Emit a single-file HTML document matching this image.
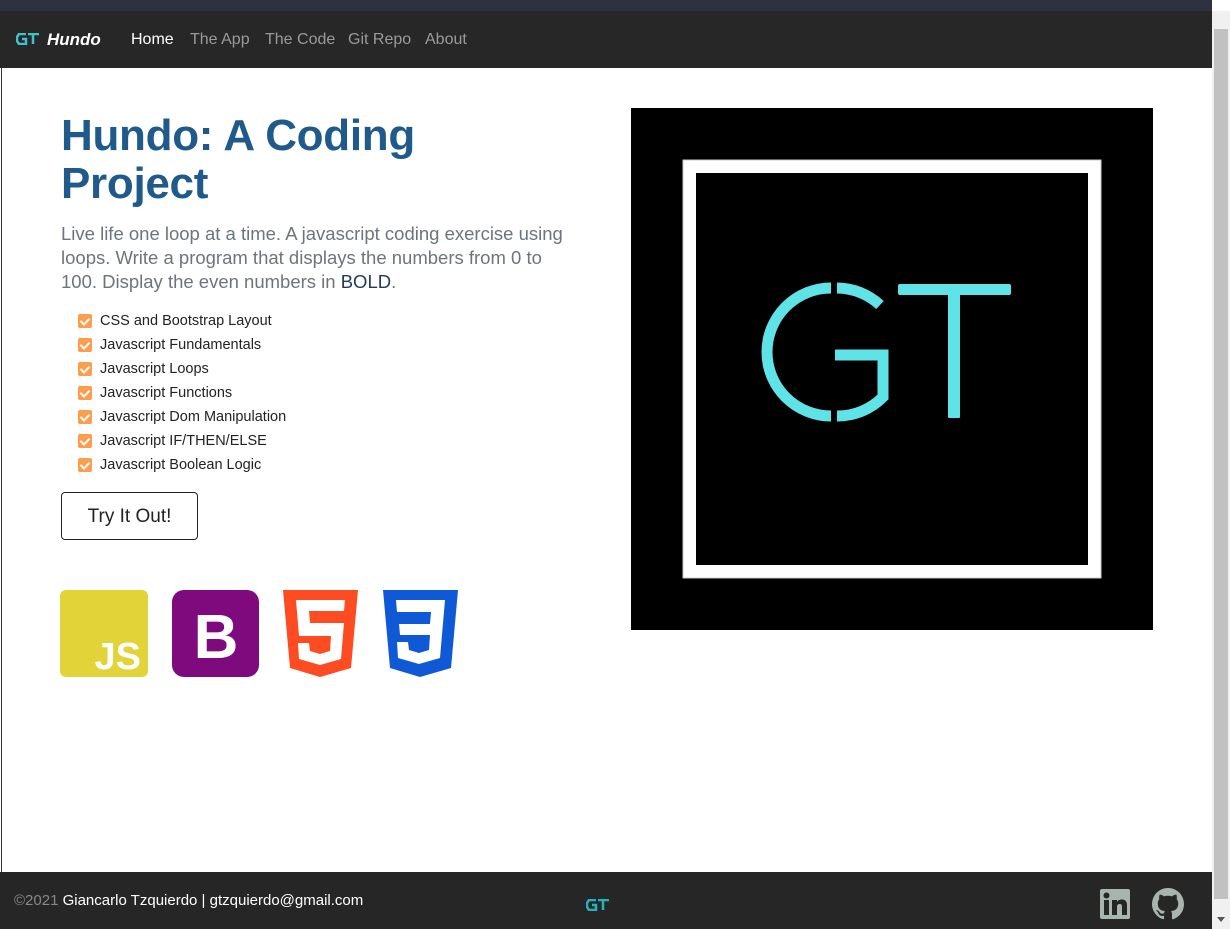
<!DOCTYPE html>
<html><head><meta charset="utf-8"><style>
*{box-sizing:border-box;margin:0;padding:0}
body{width:1230px;height:929px;overflow:hidden;background:#fff;font-family:"Liberation Sans",sans-serif;position:relative}
.top{position:absolute;left:0;top:0;width:1212px;height:11px;background:#2e3140}
.nav{position:absolute;left:0;top:11px;width:1212px;height:57px;background:#272727}
.nav a{position:absolute;top:20px;font-size:16px;color:#9a9a9a;text-decoration:none}
.brand{position:absolute;left:47px;top:19px;color:#fff;font-weight:bold;font-style:italic;font-size:17px}
.main{position:absolute;left:1px;top:68px;width:1211px;height:804px;background:#fff;border-left:1px solid #333}
h1{position:absolute;left:61px;top:112px;font-size:44px;line-height:48px;color:#1f5a8a;font-weight:bold;width:420px;letter-spacing:-0.3px}
.lead{position:absolute;left:61px;top:222px;width:515px;font-size:18.5px;line-height:24px;color:#6c757d}
.lead b{font-weight:normal;color:#1f3a5a}
ul{position:absolute;left:78px;top:311px;list-style:none}
li{height:24px;font-size:14.5px;color:#222;position:relative;padding-left:22px;line-height:20px}
li:before{content:"";position:absolute;left:0;top:3px;width:14px;height:14px;background:#fd9d4d;border-radius:2px}
li:after{content:"";position:absolute;left:4px;top:5px;width:4px;height:7px;border:solid #fff;border-width:0 2px 2px 0;transform:rotate(45deg)}
.btn{position:absolute;left:61px;top:492px;width:137px;height:48px;border:1px solid #222;border-radius:4px;font-size:19px;color:#222;text-align:center;line-height:48px}
.foot{position:absolute;left:0;top:872px;width:1212px;height:57px;background:#262626}
.sb{position:absolute;left:1212px;top:11px;width:18px;height:918px;background:#f0f0f0}
</style></head><body>
<div class="top"></div>
<div class="nav">
<svg style="position:absolute;left:16px;top:22px" width="24" height="12" viewBox="0 0 24 12"><path d="M10 1H3L1 4v4l2 3h7V6H6" fill="none" stroke="#3cc4c8" stroke-width="2.5"/><path d="M12 1h11M17 1v10" stroke="#3cc4c8" stroke-width="2.5"/></svg>
<span class="brand">Hundo</span>
<a style="left:131px;color:#fff">Home</a><a style="left:190px">The App</a><a style="left:265px">The Code</a><a style="left:348px">Git Repo</a><a style="left:425px">About</a>
</div>
<div class="main"></div>
<h1>Hundo: A Coding Project</h1>
<p class="lead">Live life one loop at a time. A javascript coding exercise using loops. Write a program that displays the numbers from 0 to 100. Display the even numbers in <b>BOLD</b>.</p>
<ul><li>CSS and Bootstrap Layout</li><li>Javascript Fundamentals</li><li>Javascript Loops</li><li>Javascript Functions</li><li>Javascript Dom Manipulation</li><li>Javascript IF/THEN/ELSE</li><li>Javascript Boolean Logic</li></ul>
<div class="btn">Try It Out!</div>
<svg style="position:absolute;left:60px;top:590px" width="400" height="88" viewBox="0 0 400 88">
<rect x="0" y="0" width="88" height="87" rx="6" fill="#e2d338"/>
<text x="81" y="79" text-anchor="end" font-family="Liberation Sans" font-weight="bold" font-size="38" fill="#fff">JS</text>
<rect x="112" y="0" width="87" height="87" rx="12" fill="#7e0a7e"/>
<text x="156" y="68" text-anchor="middle" font-family="Liberation Sans" font-weight="bold" font-size="62" fill="#fff">B</text>
<path d="M223 0h75l-7 78-31 9-30-9z" fill="#fe4c22"/>
<path d="M285 10h-49l3 36h32l-1 15-10 3-10-3-1-8h-11l1 16 21 6 21-6 3-36h-34l-1-12h35z" fill="#fff"/>
<path d="M323 0h75l-7 78-31 9-30-9z" fill="#1059d6"/>
<path d="M336 10h49l-5 58-21 6-21-6-1-16h11l1 8 10 3 10-3 1-15h-30l-1-11h31l1-12h-34z" fill="#fff"/>
</svg>
<svg style="position:absolute;left:631px;top:108px" width="522" height="522" viewBox="631 108 522 522">
<rect x="631" y="108" width="522" height="522" fill="#000"/>
<rect x="689.5" y="166.5" width="405" height="405" fill="none" stroke="#fff" stroke-width="13"/>
<rect x="683" y="160" width="418" height="418" fill="none" stroke="#ccc" stroke-width="1"/>
<path d="M831 288A64 64 0 0 0 831 416" fill="none" stroke="#5fe3e6" stroke-width="11"/>
<path d="M837 288A64 64 0 0 1 880 305" fill="none" stroke="#5fe3e6" stroke-width="11"/>
<path d="M837 416A64 64 0 0 0 883 397V355H835" fill="none" stroke="#5fe3e6" stroke-width="11"/>
<rect x="898" y="284" width="113" height="11" rx="2" fill="#5fe3e6"/>
<rect x="948" y="290" width="12" height="128" rx="1" fill="#5fe3e6"/>
</svg>
<div class="foot">
<span style="position:absolute;left:14px;top:20px;font-size:15px;color:#888">©2021 <span style="color:#fff">Giancarlo Tzquierdo | gtzquierdo@gmail.com</span></span>
<svg style="position:absolute;left:586px;top:27px" width="24" height="12" viewBox="0 0 24 12"><path d="M10 1H3L1 4v4l2 3h7V6H6" fill="none" stroke="#1fb4c0" stroke-width="2.5"/><path d="M12 1h11M17 1v10" stroke="#1fb4c0" stroke-width="2.5"/></svg>
<svg style="position:absolute;left:1100px;top:17px" width="30" height="30" viewBox="0 0 30 30"><rect width="30" height="30" rx="2" fill="#a8b5ad"/><rect x="4" y="11" width="5" height="15" fill="#262626"/><circle cx="6.5" cy="6.5" r="3" fill="#262626"/><path d="M12 11h5v2c1-2 3-2.5 5-2.5 4 0 5 2.5 5 6V26h-5v-8c0-2-.5-3-2.3-3S17 16 17 18v8h-5z" fill="#262626"/></svg>
<svg style="position:absolute;left:1152px;top:16px" width="32" height="32" viewBox="0 0 16 16"><path fill="#a8b5ad" d="M8 0C3.58 0 0 3.580 0 8c0 3.54 2.29 6.53 5.47 7.59.4.07.55-.17.55-.38v-1.33c-2.230.48-2.7-1.07-2.7-1.07-.36-.92-.89-1.17-.89-1.17-.73-.5.05-.49.05-.49.8.06 1.23.83 1.23.83.72 1.22 1.87.87 2.33.66.07-.52.28-.87.5-1.07-1.78-.2-3.64-.89-3.64-3.95 0-.87.31-1.59.82-2.15-.08-.2-.36-1.02.08-2.12 0 0 .67-.21 2.2.82a7.6 7.6 0 0 1 4 0c1.53-1.04 2.2-.82 2.2-.82.44 1.1.16 1.92.08 2.12.51.56.82 1.27.82 2.15 0 3.07-1.87 3.75-3.65 3.95.29.25.54.73.54 1.48v2.2c0 .21.15.46.55.38A8 8 0 0 0 16 8c0-4.42-3.58-8-8-8z"/></svg>
</div>
<div class="sb"><div style="position:absolute;left:2px;top:18px;width:14px;height:870px;background:#c1c1c1"></div><div style="position:absolute;left:5px;top:906px;border:4px solid transparent;border-top:5px solid #555"></div></div>
</body></html>
